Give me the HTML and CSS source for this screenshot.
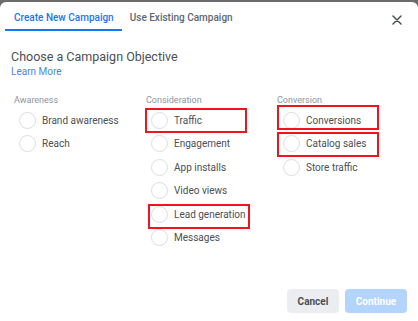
FILE: index.html
```html
<!DOCTYPE html>
<html lang="en">
<head>
    <meta charset="UTF-8">
    <meta name="viewport" content="width=device-width, initial-scale=1.0">
    <title>Create New Campaign</title>
    <link rel="stylesheet" href="styles.css">
</head>
<body>

    <div class="dialog">

        <!-- Tabs no topo -->
        <div class="cabecalho">
            <div class="abas">
                <span class="aba ativa">Create New Campaign</span>
                <span class="aba">Use Existing Campaign</span>
            </div>
            <button class="fechar" aria-label="Fechar">
                <svg width="10" height="10" viewBox="0 0 10 10">
                    <path d="M1 1 L9 9 M9 1 L1 9" stroke="#4b4f56" stroke-width="1.5" stroke-linecap="round"/>
                </svg>
            </button>
        </div>

        <div class="conteudo">
            <h1>Choose a Campaign Objective</h1>
            <a href="#" class="saiba-mais">Learn More</a>

            <div class="colunas">
                <div class="coluna">
                    <p class="grupo">Awareness</p>
                    <label class="opcao"><span class="radio"></span>Brand awareness</label>
                    <label class="opcao"><span class="radio"></span>Reach</label>
                </div>

                <div class="coluna">
                    <p class="grupo">Consideration</p>
                    <label class="opcao marcado"><span class="radio"></span>Traffic</label>
                    <label class="opcao"><span class="radio"></span>Engagement</label>
                    <label class="opcao"><span class="radio"></span>App installs</label>
                    <label class="opcao"><span class="radio"></span>Video views</label>
                    <label class="opcao marcado deslocado"><span class="radio"></span>Lead generation</label>
                    <label class="opcao"><span class="radio"></span>Messages</label>
                </div>

                <div class="coluna">
                    <p class="grupo">Conversion</p>
                    <label class="opcao marcado acima"><span class="radio"></span>Conversions</label>
                    <label class="opcao marcado abaixo"><span class="radio"></span>Catalog sales</label>
                    <label class="opcao"><span class="radio"></span>Store traffic</label>
                </div>
            </div>
        </div>

        <!-- Botoes do rodape -->
        <div class="rodape">
            <button class="botao cancelar">Cancel</button>
            <button class="botao continuar">Continue</button>
        </div>

    </div>

</body>
</html>
```

FILE: styles.css
```css
html {
    background-color: #6b6b6b;
}

body {
    margin: 0;
    padding: 0;
    font-family: Roboto, "Liberation Sans", Arial, sans-serif;
}

.dialog {
    margin-top: 2px;
    height: 319px;
    background-color: #ffffff;
    border-radius: 6px 6px 0 0;
    display: flex;
    flex-direction: column;
}

.cabecalho {
    display: flex;
    justify-content: space-between;
    align-items: flex-start;
}

.abas {
    display: flex;
    margin-left: 5px;
}

.aba {
    padding: 9px 8px 4px 9px;
    line-height: 14px;
    font-size: 10px;
    font-weight: 500;
    color: #606770;
    border-bottom: 2px solid transparent;
}

.aba + .aba {
    padding-left: 8px;
}

.aba.ativa {
    color: #1877f2;
    border-bottom-color: #1877f2;
}

.fechar {
    background: none;
    border: none;
    padding: 0;
    margin: 13px 16px 0 0;
    width: 10px;
    height: 10px;
    display: flex;
    cursor: pointer;
}

.conteudo {
    flex: 1;
    padding: 18px 11px 0;
}

h1 {
    margin: 0;
    font-size: 12.5px;
    font-weight: 400;
    line-height: 16px;
    color: #4b4f56;
}

.saiba-mais {
    display: block;
    font-size: 10px;
    line-height: 13px;
    color: #4a86e8;
    text-decoration: none;
}

.colunas {
    display: grid;
    grid-template-columns: 132px 131px auto;
    margin-top: 16px;
    margin-left: 3px;
}

.grupo {
    margin: 0 0 2.5px;
    font-size: 9px;
    line-height: 12px;
    color: #90949c;
}

.opcao {
    position: relative;
    display: flex;
    align-items: center;
    height: 23.5px;
    padding-left: 5px;
    font-size: 10px;
    color: #4b4f56;
}

.coluna:last-child .opcao {
    padding-left: 6px;
}

.radio {
    width: 15px;
    height: 15px;
    border: 1px solid #dadde1;
    border-radius: 50%;
    margin-right: 6px;
    flex-shrink: 0;
}

/* caixas vermelhas de destaque */
.marcado::after {
    content: "";
    position: absolute;
    left: -1px;
    top: -1px;
    width: 98px;
    height: 21px;
    border: 2px solid #f0141e;
}

.marcado.deslocado::after {
    left: 2px;
    top: 1px;
}

.marcado.acima::after {
    left: 0;
    top: -4px;
}

.marcado.abaixo::after {
    left: 0;
    top: 0;
}

.rodape {
    display: flex;
    justify-content: flex-end;
    gap: 6px;
    padding: 0 11px 8px;
}

.botao {
    height: 24px;
    border: none;
    border-radius: 4px;
    font-family: inherit;
    font-size: 10px;
    font-weight: 700;
    cursor: pointer;
}

.cancelar {
    width: 52px;
    background-color: #ebedf0;
    color: #4b4f56;
}

.continuar {
    width: 62px;
    background-color: #b2d4fd;
    color: #ffffff;
}
```
